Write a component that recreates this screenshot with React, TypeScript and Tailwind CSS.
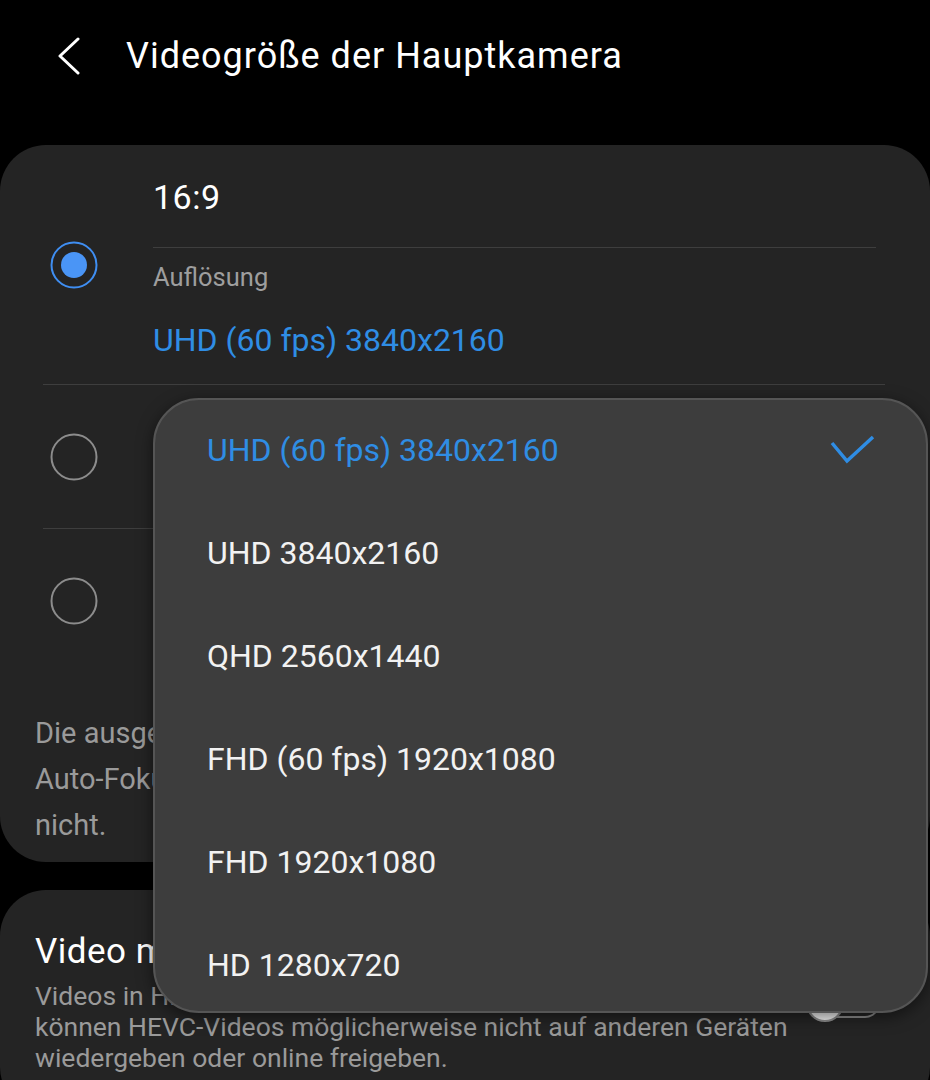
import React from 'react';

const resolutions = [
  'UHD (60 fps) 3840x2160',
  'UHD 3840x2160',
  'QHD 2560x1440',
  'FHD (60 fps) 1920x1080',
  'FHD 1920x1080',
  'HD 1280x720',
];

function Radio({ checked }: { checked?: boolean }) {
  return (
    <svg width="48" height="48" viewBox="0 0 48 48">
      {checked ? (
        <>
          <circle cx="24" cy="24" r="22.5" fill="none" stroke="#3f8ef2" strokeWidth="2" />
          <circle cx="24" cy="24" r="13" fill="#4a95f6" />
        </>
      ) : (
        <circle cx="24" cy="24" r="22.5" fill="none" stroke="#8c8c8c" strokeWidth="2" />
      )}
    </svg>
  );
}

export default function App() {
  return (
    <div className="relative w-[930px] h-[1080px] overflow-hidden bg-black font-['Roboto',sans-serif]">
      {/* Header */}
      <div className="flex items-center h-[112px] pl-[56px]">
        <svg width="26" height="38" viewBox="0 0 26 38">
          <polyline points="22,2 4,19 22,36" fill="none" stroke="#ffffff" strokeWidth="3" strokeLinecap="round" strokeLinejoin="round" />
        </svg>
        <h1 className="ml-[44px] text-[36px] leading-[42px] tracking-[1px] text-white">Videogröße der Hauptkamera</h1>
      </div>

      {/* Aspect ratio card */}
      <div className="mt-[33px] rounded-[46px] bg-[#242424]">
        <div className="flex items-center h-[239px]">
          <div className="w-[153px] flex justify-center pr-[6px]">
            <Radio checked />
          </div>
          <div className="flex-1 pr-[54px] pt-[32px] h-full">
            <div className="text-[34px] leading-[40px] tracking-[0.5px] text-white">16:9</div>
            <div className="mt-[30px] h-[1px] bg-[#3e3e3e]" />
            <div className="mt-[14px] text-[25.5px] leading-[30px] text-[#9e9e9e]">Auflösung</div>
            <div className="mt-[29px] text-[32px] leading-[38px] text-[#2f8de4]">UHD (60 fps) 3840x2160</div>
          </div>
        </div>
        <div className="ml-[43px] mr-[45px] h-[1px] bg-[#3e3e3e]" />
        <div className="flex items-center h-[143px]">
          <div className="w-[153px] flex justify-center pr-[6px]">
            <Radio />
          </div>
          <div className="text-[34px] leading-[40px] text-white">1:1</div>
        </div>
        <div className="ml-[43px] mr-[45px] h-[1px] bg-[#3e3e3e]" />
        <div className="flex items-center h-[143px]">
          <div className="w-[153px] flex justify-center pr-[6px]">
            <Radio />
          </div>
          <div className="text-[34px] leading-[40px] text-white">Voll</div>
        </div>
        <p className="mt-[38px] px-[35px] pb-[14px] text-[29px] leading-[46px] text-[#9a9a9a] whitespace-nowrap">
          Die ausgewählte Videogröße unterstützt
          <br />
          Auto-Fokus-Verfolgung und Videoeffekte
          <br />
          nicht.
        </p>
      </div>

      {/* HEVC card */}
      <div className="mt-[28px] rounded-[46px] bg-[#242424] flex items-center pt-[42px] pb-[40px]">
        <div className="flex-1 pl-[35px]">
          <div className="text-[35px] leading-[40px] tracking-[0.5px] text-white">Video mit hoher Effizienz</div>
          <p className="mt-[8px] text-[26.5px] leading-[31px] text-[#9a9a9a] whitespace-nowrap">
            Videos in HEVC aufnehmen, um Speicherplatz zu sparen. Sie
            <br />
            können HEVC-Videos möglicherweise nicht auf anderen Geräten
            <br />
            wiedergeben oder online freigeben.
          </p>
        </div>
        <div className="relative mr-[50px] w-[74px] h-[38px] flex items-center">
          <div className="ml-[6px] w-[68px] h-[30px] rounded-full border-2 border-[#8c8c8c]" />
          <div className="absolute left-0 top-0 w-[38px] h-[38px] rounded-full bg-[#f2f2f2] border-2 border-[#8c8c8c]" />
        </div>
      </div>

      {/* Resolution dropdown */}
      <div className="absolute left-[153px] top-[398px] w-[775px] h-[615px] rounded-[46px] border-2 border-[#555555] bg-[#3d3d3d] shadow-[0_4px_16px_rgba(0,0,0,0.5)] overflow-hidden">
        {resolutions.map((r, i) => (
          <div key={r} className="flex items-center justify-between h-[103px] pb-[4px] pl-[52px] pr-[50px]">
            <span className={`text-[32px] leading-[38px] ${i === 0 ? 'text-[#2f8de4]' : 'text-[#f2f2f2]'}`}>{r}</span>
            {i === 0 && (
              <svg width="46" height="30" viewBox="0 0 46 30">
                <polyline points="2,8 17,26 43,2" fill="none" stroke="#2f8de4" strokeWidth="3.5" />
              </svg>
            )}
          </div>
        ))}
      </div>
    </div>
  );
}
